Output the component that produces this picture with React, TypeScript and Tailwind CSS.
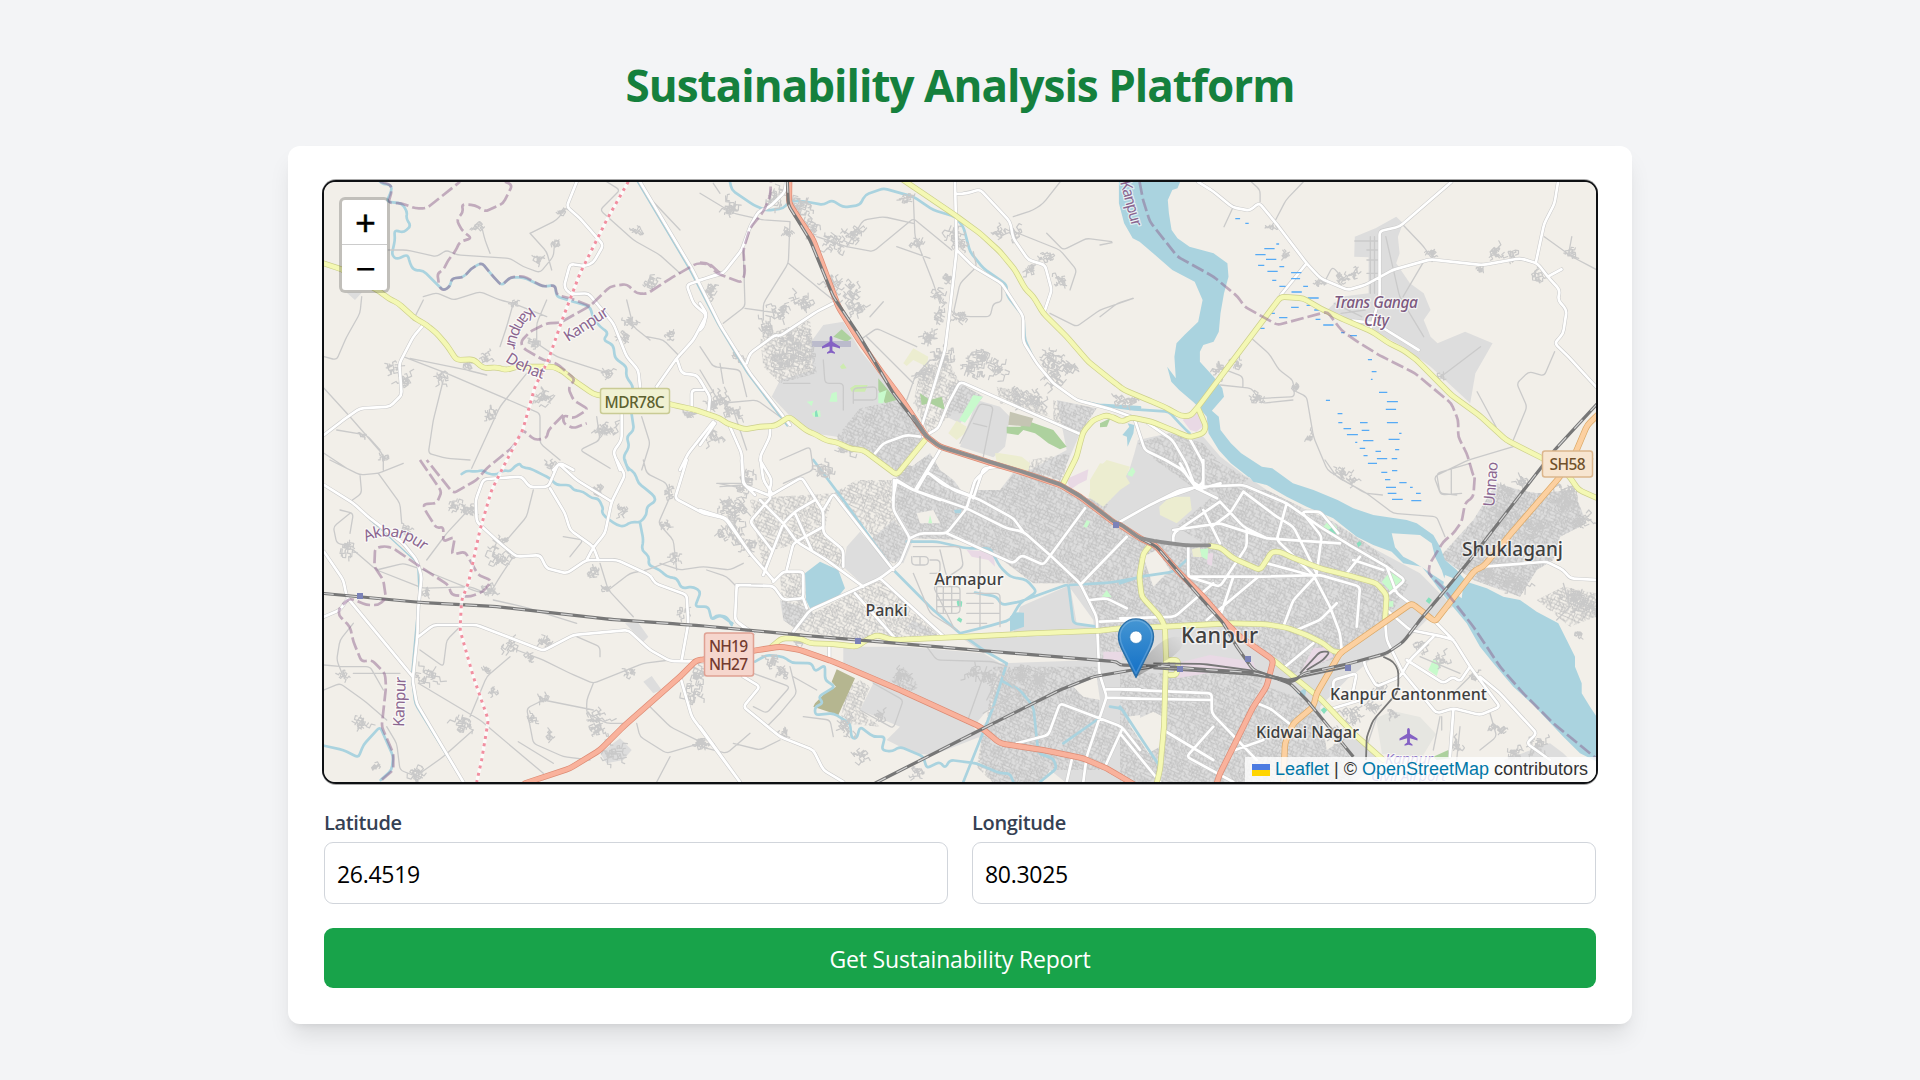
import React from "react";

/* Map geometry is stored per survey sheet: a bare token selects the sheet, "x,y" tokens are points on it. */
const SHEETS: Record<string, [number, number, number]> = {
  "1": [280, 140, 1 / 3],
  "2": [700, 170, 1 / 3],
  "3": [1100, 170, 540 / 1568],
  "4": [310, 460, 1 / 3],
  "5": [700, 460, 1 / 3],
  "6": [1120, 460, 1 / 3],
};

type Pt = [number, number];

function pts(src: string): Pt[] {
  let s = SHEETS["1"];
  const out: Pt[] = [];
  for (const t of src.trim().split(/\s+/)) {
    if (t.indexOf(",") < 0) {
      s = SHEETS[t];
      continue;
    }
    const [a, b] = t.split(",").map(Number);
    out.push([s[0] + a * s[2], s[1] + b / 3]);
  }
  return out;
}

const f = (n: number) => n.toFixed(1);
const line = (src: string) => "M" + pts(src).map((p) => f(p[0]) + " " + f(p[1])).join("L");
const lines = (a: string[]) => a.map(line).join("");
const area = (a: string[]) => a.map((s) => line(s) + "Z").join("");

/* Polyline whose corners are rounded by at most 4px. */
function smooth(src: string) {
  const p = pts(src);
  let d = "M" + f(p[0][0]) + " " + f(p[0][1]);
  const toward = (a: Pt, b: Pt): Pt => {
    const l = Math.hypot(b[0] - a[0], b[1] - a[1]) || 1;
    const t = Math.min(0.5, 4 / l);
    return [a[0] + (b[0] - a[0]) * t, a[1] + (b[1] - a[1]) * t];
  };
  for (let i = 1; i < p.length - 1; i++) {
    const u = toward(p[i], p[i - 1]);
    const v = toward(p[i], p[i + 1]);
    d += "L" + f(u[0]) + " " + f(u[1]) + "Q" + f(p[i][0]) + " " + f(p[i][1]) + " " + f(v[0]) + " " + f(v[1]);
  }
  const e = p[p.length - 1];
  return d + "L" + f(e[0]) + " " + f(e[1]);
}
const smooths = (a: string[]) => a.map(smooth).join("");

function rng(seed: number) {
  let s = seed;
  return () => {
    s = (s * 1664525 + 1013904223) % 4294967296;
    return s / 4294967296;
  };
}

/* Short right-angled lanes around a village centre. */
function village(x: number, y: number, r: number, seed: number) {
  const R = rng(seed * 7919 + 13);
  const base = R() * 1.57;
  let d = "";
  const n = Math.round(3 + r * 1.1);
  for (let i = 0; i < n; i++) {
    const a = R() * 6.283;
    const q = R() * r * 0.75;
    let cx = x + Math.cos(a) * q;
    let cy = y + Math.sin(a) * q * 0.8;
    d += "M" + f(cx) + " " + f(cy);
    let h = base + Math.floor(R() * 4) * 1.571;
    for (let k = 0; k < 3; k++) {
      const l = 1.5 + R() * Math.min(4.5, r * 0.35);
      cx += Math.cos(h) * l;
      cy += Math.sin(h) * l;
      d += "L" + f(cx) + " " + f(cy);
      h += (R() < 0.5 ? 1 : -1) * (1.2 + R() * 0.5);
    }
  }
  return d;
}

/* Block-like street mesh used to fill built-up areas. */
function mesh(size: number, step: number, seed: number) {
  const R = rng(seed);
  let d = "";
  for (let y = 0; y < size; y += step)
    for (let x = 0; x < size; x += step) {
      if (R() < 0.75) d += "M" + f(x) + " " + f(y) + "l" + f(step) + " " + f((R() - 0.5) * 2);
      if (R() < 0.75) d += "M" + f(x + R() * 2) + " " + f(y) + "l" + f((R() - 0.5) * 2) + " " + f(step);
      if (R() < 0.3) d += "M" + f(x) + " " + f(y) + "l" + f(step * 1.3) + " " + f(step);
    }
  return d;
}

const RIVER =
  "3 55,30 55,100 70,160 95,205 115,215 160,255 210,300 275,335 298,390 285,455 245,495 222,520 216,560 220,625 195,590 207,635 230,660 270,695 285,710 310,740 315,790 345,840 380,880 430,920 480,945 6 375,35 400,65 440,75 500,110 560,140 640,175 710,230 760,255 815,275 850,310 905,320 930,350 955,385 990,430 1040,490 1080,560 1120,610 1180,680 1240,735 1330,830 1380,880 1430,905 1430,770 1410,740 1385,700 1385,670 1365,620 1365,590 1340,540 1315,490 1250,455 1200,420 1150,410 1100,385 1040,365 1010,330 975,300 960,260 940,225 890,190 860,180 760,165 700,145 3 690,990 620,960 560,940 500,895 470,890 410,850 380,820 350,780 345,740 325,722 360,680 355,655 330,620 290,575 290,545 300,525 330,515 345,485 350,430 360,370 373,320 370,280 330,250 260,230 225,205 208,180 200,130 197,90 210,60 225,55 235,30";

const ISLAND = ["6 815,220 900,225 935,250 945,290 965,330 978,370 940,345 910,325 880,305 850,290 825,262", "6 975,345 1000,355 985,385 970,375", "6 1015,385 1028,390 1025,415 1012,405"];

const URBAN = [
  "2 330,520 370,465 430,455 480,540 560,640 620,700 690,800 600,910 450,830 410,800 340,790 300,770 215,680 240,630 340,600",
  "2 830,690 900,710 930,740 915,830 880,862 780,830",
  "2 1070,690 1190,715 1140,790 1080,930 990,900 1100,840",
  "2 750,650 780,640 850,680 780,760 740,740",
  "2 580,930 690,850 720,900 760,930 830,960 900,960 960,880 1080,950 1160,985 1230,990 1320,850 3 85,900 100,850 110,810 200,790 300,800 350,860 430,925 6 375,45 440,90 560,150 640,185 760,265 900,340 1000,440 920,480 840,560 760,590 620,720 720,830 790,900 700,970 5 1100,970 1050,930 850,860 830,820 870,770 900,610 1190,600 1180,480 1100,370 1000,370 880,280 800,240 630,235 580,140",
  "5 430,560 620,560 850,580 900,610 870,740 820,800 840,830 700,885 640,880 560,840 600,800 480,750 520,670 430,610",
  "5 960,440 1110,375 1130,490 1190,500 1190,600 850,580 780,530 940,520",
  "5 440,260 480,215 580,330 495,380 430,320",
  "5 580,180 640,240 610,310 560,300 510,240",
  "5 640,480 720,530 690,530 620,500",
  "5 850,800 1050,930 1020,970 880,970 840,900",
  "5 240,420 320,445 340,460 290,510 250,480",
  "3 740,200 800,175 860,140 880,160 865,200 870,250 860,280 900,340 940,370 960,420 940,450 960,500 980,520 1060,485 1140,520 1090,610 1075,700 960,590 880,530 790,480 660,420 700,380 780,370 780,262 738,260",
  "6 960,290 1060,180 1130,70 1200,90 1250,100 1360,90 1400,190 1320,230 1300,300 1250,330 1200,410 1060,360",
  "6 1150,900 1290,850 1330,880 1380,930 1180,930",
  "4 870,880 930,835 965,870 940,900 890,910",
  "4 1000,665 1025,648 1055,690 1030,700",
  "4 945,490 985,488 1015,530 1000,545",
  "1 200,458 245,458 225,480",
];

const DENSE = [
  "2 480,715 600,690 690,800 600,910 450,830 410,800",
  "2 180,500 330,450 350,610 240,640 190,590",
  "2 660,600 740,560 780,640 850,680 800,730 760,730 700,780 690,800 640,700",
  "2 1060,690 1190,715 1140,790 1060,760",
  "2 890,650 1000,670 1050,740 900,700",
  "2 990,870 1110,850 1085,940 980,905",
  "2 580,930 690,850 720,900 760,930 830,960 900,960 960,890 1080,950 1160,985 1230,990 1200,1050 900,1000 560,1000",
  "5 600,60 700,20 830,110 960,75 1085,85 1320,240 1320,600 1200,600 1190,480 1150,370 1000,370 880,280 800,240 640,235 590,150",
  "6 0,220 100,250 270,260 450,330 440,90 560,150 640,185 760,265 870,370 800,480 660,590 520,640 460,610 330,500 0,500",
  "6 170,200 300,90 440,90 450,330 330,300",
  "6 0,640 440,640 350,840 290,966 0,966",
  "6 440,680 560,720 690,890 700,966 290,966",
  "3 110,820 200,790 300,820 350,880 430,925 430,980 280,960 160,870",
  "5 880,620 1190,620 1200,780 1260,800 1220,930 1050,930 850,860",
  "5 850,810 1060,930 1020,970 880,970 830,920",
  "5 240,340 310,335 320,440 340,460 290,510 250,480",
  "5 340,460 540,355 720,530 590,540 400,530 290,510",
  "5 510,240 580,180 630,240 600,310 560,310",
  "5 470,60 580,60 590,160 620,240 520,230 400,100",
  "5 150,120 230,110 400,100 370,220 430,260 430,330 300,250 220,270 190,330",
  "6 960,290 1060,180 1130,70 1200,90 1250,100 1360,90 1400,190 1320,230 1300,300 1250,330 1200,410 1060,360",
  "6 1250,420 1330,380 1428,400 1428,470 1350,500",
  "5 440,680 480,660 510,680 480,750 540,800 420,790",
  "5 570,660 610,620 660,680 620,700",
];

const LIGHT = [
  "6 70,290 110,270 150,330 100,380",
  "6 25,790 100,755 130,770 120,860 85,880",
  "5 1120,680 1190,650 1200,720 1150,710",
  "2 740,900 860,890 900,905 830,960 800,985",
  "5 1280,770 1320,765 1320,820",
  "6 700,640 830,590 860,720 620,870 600,740",
  "5 650,160 700,150 720,190 660,190",
];

const GREEN = [
  "2 400,500 425,478 455,505 440,515",
  "2 535,625 590,690 555,700 535,660",
  "2 660,670 690,690 725,680 735,720 690,700 665,705",
  "2 990,755 1060,780 1100,830 1080,838 1045,820 1020,800 1005,790 970,780 955,795 920,790 920,770 960,770",
  "3 0,760 30,745 20,770 0,772",
  "6 940,890 985,870 990,895 950,900",
];
const MINT = [
  "2 777,750 820,675 848,680 795,758",
  "2 395,670 410,665 412,695 388,695",
  "2 320,695 340,692 335,708",
  "2 335,730 360,720 362,740 340,740",
  "2 535,670 560,660 550,700 535,700",
  "6 610,200 625,183 650,200 655,225",
  "6 785,365 810,335 855,365 815,398",
  "6 925,630 940,597 962,610 950,648",
  "6 805,425 820,422 820,440 805,440",
  "6 240,268 265,265 262,300 245,290",
  "5 1205,410 1220,390 1235,412",
  "5 1150,200 1160,180 1170,185 1160,203",
  "5 685,190 690,165 697,190",
  "3 80,910 95,892 103,905 92,920",
  "2 1282,915 1295,893 1305,905 1297,920",
];
const PITCH = [
  "5 770,425 775,418 787,425 785,440 773,440",
  "5 770,480 777,472 787,478 783,488",
  "6 625,210 640,200 655,210 645,225",
  "6 710,250 720,243 725,253 715,262",
  "6 917,423 926,412 936,420 928,432",
  "6 602,750 612,742 622,750 612,762",
  "2 345,725 350,720 355,740 345,740",
];
const LIME = ["2 450,655 465,645 503,645 495,665 455,665", "2 420,590 430,580 440,595 425,597"];
const GRASS = [
  "2 610,580 640,535 685,560 680,590 640,570 620,588",
  "2 745,790 770,752 800,770 795,790 770,810",
  "2 885,850 900,850 965,860 990,880 985,905 890,875",
  "2 1170,930 1200,880 1260,890 1290,940 1260,960 1225,985 1170,960",
  "5 1190,30 1220,0 1290,20 1260,90 1210,140 1165,110",
  "3 0,900 30,890 70,920 60,950 10,985 0,985",
  "6 118,140 150,110 210,110 215,150 170,190 120,165",
  "6 215,268 240,262 245,292 220,290",
];
const PINK = [
  "3 240,750 285,720 298,770 280,785 262,780",
  "2 1105,925 1165,898 1160,925 1110,960",
  "5 1100,60 1165,30 1160,60 1110,85",
  "5 800,270 880,275 885,320 865,300 815,290",
  "5 1210,575 1270,575 1265,600 1210,600",
  "6 170,610 270,585 400,605 410,635 350,625 170,655",
  "6 540,640 580,565 630,560 640,590",
  "6 260,280 280,280 275,318 262,312",
];
const OLIVE = ["5 410,628 465,655 415,765 340,740 345,730 375,700 408,680 395,665"];
const BROWN = ["2 930,725 1000,745 990,770 925,765"];

const WATER_AREAS = [
  "5 315,340 360,305 415,330 435,385 410,415 330,445 318,420",
  "5 930,470 945,457 972,458 972,500 930,515",
  "3 65,795 85,770 80,760 100,765 97,790 80,830 78,800",
  "6 530,700 560,682 555,712",
  "5 762,150 785,148 782,160 765,160",
];

const STREAMS = [
  "1 300,125 310,132 333,135 335,150 320,185 365,190 382,215 378,235 393,258 370,278 343,270 345,300 335,345 350,358 383,343 390,370 400,390 430,392 490,452 510,440 515,415 550,412 575,385 605,368 640,410 665,437 690,412 730,412 790,440 825,435 830,470 880,485 930,500 940,535 960,560 985,578 970,600 1000,615 1005,655 1040,680 1038,710 1060,740 1050,790 1062,870 1040,890 1048,920 1030,950 1045,990",
  "4 945,0 950,20 975,40 985,70 1005,85 1035,110 1035,125 1010,140 1010,165 990,188 965,185 940,200 920,195 885,170 875,155 880,145 865,115 845,115 820,95 790,90 780,75 740,75 720,55 690,40 660,25 635,22 630,10 615,18 600,35 580,30 560,45 530,40 520,30 500,35 470,32 455,42",
  "4 990,188 1000,240 995,270 1018,290 1015,315 1050,330 1070,350 1100,355 1115,385 1150,380 1172,395 1155,440 1195,440 1205,480 1220,465 1250,470 1265,495",
  "2 90,36 95,60 160,105 200,122 250,115 270,92 320,95 370,105 395,90 430,112 480,105 495,75 550,55 640,80 700,120 765,140 790,170 810,245 850,295 900,330 920,345 920,375 970,440 975,510 1000,565",
  "2 1130,690 1200,705 1320,712",
  "3 0,705 100,718 200,725 240,770 260,790",
  "5 340,0 430,120 580,330 700,450 780,520 850,570 920,610",
  "5 620,245 710,245 800,265 870,265 900,320 930,350 980,360 1010,395 960,430 930,480 860,500 780,520",
  "5 825,398 890,410 905,435 960,425 1105,372 1120,490 1190,500",
  "5 1110,375 1230,368 1320,352",
  "5 0,440 25,440 35,480 60,465 97,490",
  "5 165,605 200,585 250,590 275,608 335,610 345,635 375,615 375,660 405,680 355,710 370,730 345,740 345,765 400,760 450,790 455,835 470,835 480,800 520,830 555,830 545,870 575,875 600,860 670,890 680,925 720,905 735,925 750,900 830,910 900,940 930,940 940,966",
  "5 920,610 880,740 790,966",
  "5 910,665 960,690 1000,740 1015,880 1060,895 1070,925 1020,966",
  "4 42,857 100,870 145,893 160,855 210,800 250,890 245,930 212,960",
  "6 0,370 60,350 160,335 200,300",
  "6 0,740 60,830 120,920",
  "5 1230,740 1265,745 1320,830",
  "5 1190,780 1090,850",
];

const CANALS = ["1 1072,125 1228,388 1314,555 2 143,612 262,768", "4 180,180 210,205 323,310 327,400 304,650 314,732 458,966"];

const WHITE = [
  "1 1080,125 1235,385 1320,555 2 150,610 270,765",
  "1 890,125 860,200 900,235 970,315 940,368 915,378 870,372 852,440 870,462 925,460 1000,550 1040,650 1075,690 1080,740",
  "1 132,885 190,840 240,805 330,800 365,765 358,670 400,590 430,555",
  "1 1320,400 1220,435 1240,490 1280,525 1240,600 1190,655 1130,740",
  "1 1190,655 1205,700 1250,705 1290,770 1285,820",
  "1 1270,750 1235,750 1235,800",
  "1 1300,845 1225,940 1200,990",
  "1 1025,820 1025,900 1000,935 1020,990",
  "1 820,990 840,968 880,990",
  "2 258,36 255,65 210,110 175,125 150,170 125,240 70,310 0,330",
  "2 765,36 770,240 745,460 735,540 665,770",
  "2 765,72 800,70 840,58 930,155 940,205 985,270 1035,285 1055,360 1035,420",
  "2 770,240 820,290 905,340 970,440 970,515 1010,580 1060,640 1130,690 1240,720 1320,750",
  "2 400,400 350,425 240,498 225,495 150,550 140,580",
  "2 660,800 620,795 550,820 525,850",
  "2 670,800 715,775 745,700 780,635 1140,792",
  "2 720,840 650,960",
  "2 680,905 730,945 820,980",
  "2 820,985 850,895 900,890",
  "2 590,930 640,960 720,990",
  "2 590,930 578,990",
  "2 90,770 125,850 130,940 165,975",
  "2 210,770 210,800 180,860 190,930 215,970",
  "2 0,825 45,760",
  "2 0,400 20,430 10,470 0,480",
  "2 0,630 30,680 25,725",
  "3 285,36 330,65 385,112 435,122 462,98 515,165 600,280 640,325 720,360 770,345 850,300 960,268 1110,285 1220,265 1270,280 1300,320 1335,360 1330,390 1355,420 1345,490 1320,520 1360,560 1440,650",
  "3 1300,320 1340,298",
  "3 1330,36 1320,100 1290,160 1265,280",
  "3 1020,36 870,170 812,183 812,380 785,480",
  "3 600,280 525,375",
  "3 735,452 800,460 925,540",
  "3 100,745 130,840 190,870 240,900 280,955",
  "3 140,760 210,810 250,880 280,960 350,940",
  "3 260,805 300,880 300,940 270,955 175,990",
  "3 280,955 340,985",
  "4 42,75 130,130 180,175 280,250 320,300 335,350 325,440 322,530 308,660 320,730 460,966",
  "4 42,275 100,360 110,410 308,650",
  "4 600,52 520,58 497,120 500,185 570,250 620,290 690,285 710,325 770,340 830,300 920,300 1020,345 1035,370 1130,405 1135,490 1115,600",
  "4 600,52 635,50 660,82 715,80 745,10 800,60 905,125",
  "4 720,85 765,160 780,210 850,260 865,300",
  "4 920,0 945,45 905,125 885,220 850,262 830,300",
  "4 1130,0 1095,115 1180,160 1245,175 1320,280",
  "4 325,530 370,495 500,495 700,572 790,525 955,510 1020,570 1080,603 1180,605",
  "4 1112,655 1145,770 1290,966",
  "4 1320,375 1280,375 1275,480 1310,510",
  "4 42,470 90,450 110,420",
  "5 125,0 130,75 215,110 150,185 215,270",
  "5 180,0 215,60 205,110 305,52 370,155 370,220 430,270 430,320",
  "5 0,150 80,175 150,280 220,360",
  "5 180,120 250,190 290,245 380,300 490,380",
  "5 190,345 250,190 285,155 345,120",
  "5 260,330 280,250 370,200",
  "5 285,160 335,270",
  "5 370,150 400,100 580,330",
  "5 110,375 220,378 250,420 310,415 310,335 250,335 220,365",
  "5 110,375 105,480 160,520",
  "5 280,515 330,450 540,355 600,310 630,235 580,150 582,60",
  "5 310,415 320,445",
  "5 540,355 730,528",
  "5 465,400 590,540",
  "5 582,60 640,90 800,145 920,205 970,215 1050,285 1140,370 1190,470 1198,640 1220,710 1160,890 1150,966",
  "5 645,90 700,0",
  "5 680,35 760,90 840,120 940,175 970,215",
  "5 630,235 660,220 740,220 800,145 825,60 870,20",
  "5 740,220 850,270 940,310 965,285 1030,315 1155,145",
  "5 1145,370 1280,230",
  "5 1170,420 1220,415 1280,445",
  "5 1200,485 1320,480",
  "5 1220,688 1320,688",
  "5 1220,713 1320,716",
  "5 950,850 1045,825 1080,730 1265,800 1320,870",
  "5 1265,810 1215,920",
  "5 1115,900 1100,966",
  "5 130,650 180,680 130,740 240,830 340,870 370,930 430,966",
  "5 0,800 120,966",
  "5 388,560 388,600",
  "6 0,185 90,135 180,90 240,80 370,75 500,130 600,200 680,250 800,320 855,360 810,400",
  "6 250,75 250,0",
  "6 180,10 210,60 240,80",
  "6 300,125 160,220 160,250",
  "6 160,210 300,190 440,235 660,250",
  "6 250,150 300,250",
  "6 300,125 370,200 440,235",
  "6 370,95 330,160 275,200",
  "6 380,205 380,260 300,380 205,350 205,255",
  "6 370,95 470,170 520,200 590,340",
  "6 500,130 470,240 580,345 630,440 660,520 665,570",
  "6 590,340 605,230 545,155 600,155 655,220",
  "6 205,350 415,350 600,345 720,380 710,500",
  "6 415,350 260,480",
  "6 590,345 520,420 490,500",
  "6 440,310 570,345",
  "6 340,350 300,470",
  "6 280,370 165,470 0,475",
  "6 720,290 680,340",
  "6 700,300 790,330",
  "6 800,320 830,400 870,430",
  "6 650,430 600,480 530,510",
  "6 0,688 275,700 275,760 410,900",
  "6 0,715 275,720",
  "6 280,800 200,890 340,966",
  "6 130,810 280,900",
  "6 0,820 120,966",
  "6 410,730 450,745 520,800",
  "6 490,625 580,550",
  "6 795,480 800,540 850,640 950,760 1000,745 1080,765 1140,740 1050,620 1000,540 950,490",
  "6 800,450 870,510 970,530 1000,540",
  "6 860,600 970,670 1000,650 1020,665 1050,620",
  "6 940,530 870,600 840,650 770,680 740,630 730,600 800,580",
  "6 640,700 640,660 710,640 700,690",
  "6 1080,650 1140,700 1250,820 1220,850 1290,900",
  "6 1000,750 990,890",
  "6 640,745 790,700",
  "6 1090,320 1280,305 1330,330 1350,355 1430,360",
  "6 345,870 430,840",
];

const HAIR = [
  "1 980,125 1020,150 960,210 1060,300 1140,345 1200,400",
  "1 1300,130 1320,160",
  "1 1120,185 1200,270",
  "1 325,330 380,330 470,350 500,330 530,345 690,355 730,380 780,398 820,350 825,300",
  "1 430,470 470,458 520,480 600,455 660,480 700,490 800,530",
  "1 430,480 400,540",
  "1 245,470 240,520 200,590 170,660 132,650",
  "1 370,650 500,700 780,820 780,910 840,960",
  "1 390,655 560,690 620,705",
  "1 700,490 680,560 660,620",
  "1 800,480 770,550 770,610",
  "1 770,610 830,650 985,700",
  "1 740,700 660,800 575,985",
  "1 490,720 460,840 445,940 500,955 570,960",
  "1 132,745 210,830 310,945 310,990",
  "1 170,870 260,885 300,930",
  "1 132,940 200,985",
  "1 575,270 600,240 615,300 630,340",
  "1 750,280 830,240 850,215",
  "1 750,280 800,335 815,390",
  "1 1200,650 1150,600 1100,590",
  "1 1040,480 1060,560 1110,600",
  "1 1085,830 1110,910 1085,990",
  "1 950,830 960,900 900,930 990,985",
  "2 0,70 100,130 190,150 270,155",
  "2 270,155 265,280 190,400 190,450",
  "2 265,280 350,350 400,390",
  "2 130,240 135,410 70,460",
  "2 135,415 240,430",
  "2 350,200 440,230 520,245 640,145 755,240",
  "2 640,80 645,200 700,340 720,400",
  "2 440,230 490,150 550,140 640,160",
  "2 820,245 830,290 780,340 760,430 800,440 870,440 880,400 905,395 905,345",
  "2 930,180 1080,240 1130,300 1110,360",
  "2 1080,36 1030,100 1000,120 940,140",
  "2 1040,190 1090,240 1160,205 1235,215",
  "2 1050,430 1130,470 1200,420 1300,385",
  "2 480,510 530,475 650,530",
  "2 500,500 620,620 640,640",
  "2 620,690 645,620 690,570",
  "2 550,395 510,440",
  "2 590,230 690,265",
  "2 0,530 40,590 120,600 140,680",
  "2 0,600 60,700 170,690 240,740",
  "2 60,580 70,640",
  "2 100,720 140,840",
  "2 240,870 330,830 340,900 250,940",
  "2 50,940 130,940",
  "2 780,820 840,700 880,710 850,860",
  "2 820,760 860,770",
  "2 460,690 530,690 530,650 460,655 460,700",
  "2 370,570 375,640 430,640 430,720",
  "2 250,640 330,640",
  "3 1290,200 1370,260 1440,298",
  "3 1390,265 1360,255 1370,200",
  "3 880,165 940,230 960,260",
  "3 940,275 880,380",
  "3 830,200 870,380 940,500",
  "3 785,200 785,370",
  "3 797,200 797,370",
  "3 740,213 810,213",
  "3 775,240 810,240",
  "3 775,270 810,270",
  "3 775,310 810,310",
  "3 440,505 490,550 520,600 560,630 565,680 470,685",
  "3 350,645 440,655 470,700 560,690",
  "3 560,660 600,680 620,800 660,900 770,970 820,975",
  "3 340,590 415,620 415,650",
  "3 1095,665 1150,770",
  "3 1200,810 1240,710 1210,640 1245,605 1290,618 1320,545",
  "3 1200,830 1070,870 970,920 990,975 1050,970",
  "3 1020,900 1020,970",
  "3 990,620 1105,530",
  "3 700,430 770,420",
  "3 680,400 760,440",
  "3 590,36 540,90 510,150",
  "3 440,36 465,60 465,95",
  "3 0,440 50,400 95,385",
  "3 0,225 35,218",
  "3 360,170 385,115",
  "3 650,340 675,290 710,330",
  "6 615,0 650,50 740,100 820,160 950,170 975,230",
  "6 1050,10 950,40 960,100 1010,105",
  "4 60,0 150,45 205,40 280,10",
  "4 150,45 155,100 120,125",
  "4 205,40 270,130 275,190",
  "4 120,160 70,200 80,250 130,260",
  "4 90,150 130,160 120,220",
  "4 130,270 200,330 280,310 340,330 500,395 560,400",
  "4 200,330 340,385 480,380 530,400",
  "4 470,155 410,220 350,300",
  "4 670,90 650,170 590,240",
  "4 610,290 570,350 540,400",
  "4 550,420 640,440 800,490",
  "4 325,670 510,780 700,940",
  "4 330,570 400,620 410,540 450,500",
  "4 130,490 90,540 80,600 100,650",
  "4 42,615 100,620 180,620 220,690",
  "4 42,690 90,670 160,720 230,780",
  "4 230,800 260,850 270,930 320,950",
  "4 600,590 530,650 480,770",
  "4 620,570 700,600 780,640 850,670 1000,610 1080,600",
  "4 800,530 870,560 870,590",
  "4 850,670 830,720 830,760 890,790 960,790",
  "4 700,720 650,745 670,850 760,890 840,900",
  "4 700,720 850,750",
  "4 625,845 730,910",
  "4 490,810 400,890 330,940",
  "4 980,790 990,830 1070,880 1170,850",
  "4 1080,890 1040,966",
  "4 1020,740 1080,800 1170,845",
  "4 1170,860 1250,880 1320,820",
  "4 870,310 895,390 970,470",
  "4 895,390 960,340 1010,330 1090,300",
  "4 1000,0 1010,40 1070,70 1080,110",
  "4 1080,110 1045,190 1090,240 1100,330",
  "4 1050,310 1110,330 1180,320 1260,330 1300,310",
  "4 760,230 820,240 780,290",
  "4 130,640 270,640",
  "4 1225,70 1300,85",
  "5 160,640 270,680 200,760 160,740",
  "5 270,620 290,700 240,760",
  "5 240,760 200,800",
  "5 280,650 350,690",
  "5 310,770 390,780 400,830",
  "5 100,850 180,870 240,840",
  "5 680,560 710,600 880,605 920,620",
  "5 860,620 800,790",
  "5 520,670 610,720 580,805 480,750",
  "5 640,290 685,290 685,315 635,315 635,290",
  "5 660,290 660,315",
  "5 640,260 780,260 790,320 700,380 760,500",
  "5 710,380 780,380 780,460 710,460 710,380",
  "5 710,400 780,400",
  "5 710,420 780,420",
  "5 710,440 780,440",
  "5 730,380 730,460",
  "5 755,380 755,460",
  "5 720,270 740,350 850,350",
  "5 840,290 840,500",
  "5 800,400 900,400 900,500",
  "5 800,430 880,430",
  "5 800,460 900,460",
  "5 800,490 860,490",
  "5 640,340 690,460 770,510",
  "5 690,300 720,300 720,340 690,340",
  "5 20,330 80,350 110,380",
  "5 60,80 130,75",
  "6 740,860 770,770",
  "6 940,870 960,770",
  "6 965,770 965,810",
  "6 1020,800 1010,900",
  "6 1110,760 1130,830 1080,870",
  "6 1060,640 1000,700",
  "6 900,590 1020,640",
  "6 1060,330 1200,360",
  "6 1330,370 1350,440 1310,480",
  "5 860,720 900,640 960,700",
  "5 850,760 950,700 980,760",
  "5 880,790 960,740",
  "5 900,700 940,780",
];

const VILLAGES: string[] = [
  "1 850,215 4", "1 775,360 5", "1 825,310 4", "1 1075,275 5", "1 595,262 4", "1 620,650 6", "1 380,715 9", "1 485,715 6", "1 565,675 5", "1 630,822 6", "1 770,605 7", "1 705,490 3", "1 1050,545 7", "1 1170,585 5", "1 1120,430 8", "1 1290,455 8", "1 1030,590 6", "1 800,770 11", "1 985,700 6", "1 980,870 13", "1 1300,890 9", "1 1230,820 6", "1 310,950 4", "1 340,680 7", "1 250,885 2",
  "2 90,115 12", "2 230,80 14", "2 300,110 14", "2 340,170 10", "2 400,220 15", "2 460,190 11", "2 265,185 6", "2 450,370 14", "2 400,340 10", "2 470,420 10", "2 240,420 13", "2 300,400 12", "2 200,470 10", "2 280,520 18", "2 240,570 17", "2 310,570 14", "2 620,90 6", "2 760,200 10", "2 780,230 6", "2 715,380 8", "2 740,330 7", "2 780,440 8", "2 900,190 7", "2 945,190 7", "2 1035,260 7", "2 1080,330 7", "2 990,300 6", "2 690,500 11", "2 720,560 15", "2 680,610 12", "2 820,590 17", "2 850,560 13", "2 890,600 11", "2 1050,560 12", "2 1100,590 12", "2 1060,620 15", "2 1000,690 14", "2 950,680 12", "2 35,360 4", "2 60,690 12", "2 100,720 10", "2 30,700 8", "2 110,560 6", "2 370,900 10", "2 440,830 11", "2 130,960 8", "2 720,440 7", "2 650,220 6",
  "3 500,170 4", "3 640,340 5", "3 700,325 6", "3 740,310 5", "3 540,255 4", "3 1150,250 8", "3 1190,260 7", "3 1270,320 6", "3 1110,300 4", "3 1370,250 6", "3 345,600 7", "3 400,580 7", "3 460,685 7", "3 565,650 4", "3 610,800 4", "3 700,910 7", "3 730,930 5", "3 960,250 5", "3 60,690 7", "3 90,695 7", "3 1180,960 7", "3 1230,930 8", "3 1400,860 11", "3 1350,970 13", "3 990,620 3",
  "4 120,265 9", "4 285,210 5", "4 430,135 7", "4 475,145 9", "4 570,295 14", "4 580,240 4", "4 720,15 5", "4 860,85 6", "4 935,150 6", "4 850,330 7", "4 890,390 4", "4 1075,100 6", "4 1120,455 5", "4 1095,290 5", "4 1065,190 5", "4 350,650 12", "4 460,785 11", "4 160,790 8", "4 100,645 4", "4 600,560 8", "4 705,545 7", "4 660,590 5", "4 545,695 4", "4 535,630 4", "4 860,780 12", "4 870,810 8", "4 670,775 5", "4 700,715 5", "4 910,880 12", "4 1175,850 7", "4 1150,700 11", "4 1170,640 12", "4 960,640 5", "4 320,945 10", "4 200,920 4", "4 720,830 4", "4 1290,150 11", "4 1240,220 7", "4 350,400 4", "4 540,390 7",
  "5 80,140 10", "5 110,230 10", "5 150,60 10", "5 100,180 14", "5 150,260 10", "5 215,610 8", "5 250,640 7", "5 60,620 9", "5 290,545 7", "5 600,650 8", "5 440,800 10", "5 480,890 7", "5 540,770 6", "5 820,640 8", "5 860,650 10", "5 650,940 7", "5 250,820 5", "5 10,850 6", "5 610,40 13", "5 1010,660 11", "5 960,640 9",
  "6 1010,860 7", "6 1120,800 5", "6 1150,810 4", "6 780,690 8", "6 640,830 14", "6 700,760 12", "6 900,560 7", "6 960,600 8", "6 1060,650 6", "6 820,760 5", "6 1250,860 12", "6 1180,880 10", "6 1360,420 14", "6 1400,440 12", "6 1100,340 14", "6 1180,370 16", "6 1380,520 4", "6 1330,130 15", "6 1380,180 12", "6 750,740 8", "6 1140,170 17", "6 1230,200 18",
];

const BORDERS = [
  "1 300,125 333,135 335,155 325,188 365,190 405,205 440,205 540,125",
  "1 675,125 697,135 670,190 615,215 585,195 545,193 550,215 530,240 545,270 575,295 540,305 525,335 505,360 490,390 472,400 478,440 490,452 510,440 515,415 550,412 575,385 605,368 640,410 665,437 690,412 730,408 790,440 825,435 830,465 880,478 930,498",
  "1 1320,400 1290,372 1250,370 1180,410 1100,462 1070,460 1040,432 990,440 930,498 840,548 800,550 750,575 722,605 730,625 790,660 830,670 885,718 865,745 880,780 925,808 880,835 850,825 850,850 880,865 920,850",
  "1 850,825 805,870 800,895 765,900 728,870 700,920 620,985 4 500,60 430,100 350,0",
  "4 330,0 395,95 380,130 340,132 345,150 380,205 400,200 400,245 435,230 425,285 465,275 485,310 505,345 545,362 520,395 480,410 425,405 415,375 330,320 250,265 225,258 195,265 193,320 220,360 228,415 205,435 170,435 120,415 90,440 85,465 120,500 130,545 155,605 185,600 225,640 228,680 215,800 250,880 250,930 212,962",
  "2 0,278 25,280 50,310 125,338 135,310 130,240 150,175 190,125 210,80 213,36",
  "3 115,36 125,90 145,155 225,260 330,320 400,380 420,410 515,465 660,425 700,480 740,510 810,555 915,610 1020,700 1040,750 1040,800 1065,850 1085,920 6 1065,40 1060,110 1035,130 1025,185 1000,220 970,245 930,310 925,340 970,385 1060,500 1140,620 1210,700 1300,790 1428,895",
];

const YELLOW = [
  "1 125,368 185,388 300,455 325,475 355,490 405,535 440,555 470,580 500,615 530,660 580,658 610,685 650,682 680,690 710,680 820,680 850,695 880,720 940,762 980,770 1100,775 1180,795 1240,808 1320,835 2 80,760 135,778 180,770 225,768 268,740 320,782 350,795 380,812 410,817 455,837 490,840 590,915 675,810",
  "2 610,30 765,135 840,190 900,245 945,300 975,355 1000,380 1030,430 1100,500 1165,575 1240,635 3 70,660 140,690 190,712 235,738 262,738 285,710 525,380 590,385 640,415 700,445 790,485 840,520 880,540 920,570 1020,675 1100,735 1180,810 1285,865 1360,915 1390,960 1445,985",
  "3 285,715 308,770 300,790 260,802 220,785 150,755 90,742 65,755 30,738 2 1265,755 1220,735 1180,750 1150,785 1140,820 1130,860 1090,940",
  "6 95,250 70,280 58,350 65,410 120,470 135,500 138,600 132,800 120,930 110,970",
  "5 215,560 245,535 300,535 330,550 400,552 470,560 500,540 530,525 580,540 800,530 1000,520 1200,512 6 0,505 130,500 330,490 440,493 500,503 560,525 610,550 640,575 665,577",
  "6 270,258 300,262 340,295 420,330 440,300 455,275 480,275 510,290 600,325 700,350 770,370 800,405 795,480",
  "6 460,600 600,715 700,820 790,900",
  "6 145,600 175,600 170,645 150,645",
];
const TRUNK = [
  "2 268,32 267,100 300,150 340,210 370,290 400,370 415,410 470,500 540,600 600,680 680,800 720,830 860,875 960,905 1080,945 5 1140,110 1245,190 6 0,195 60,235 105,255 170,330 250,410 310,480 360,530 460,600 440,680 400,740 350,840 300,940 290,970",
  "4 645,970 780,925 870,870 940,800 1110,650 1160,600 1190,598 5 100,585 160,572 240,560 300,570 400,605 600,690 840,800 900,850 1040,872 1150,895 1220,925 1300,972",
];
const ORANGE = ["3 1445,735 1415,765 1380,850 6 1320,50 1165,230 1090,320 1065,330 945,485 920,465 875,430 660,580 590,700 580,740 520,790 495,850 490,970"];
const RAIL = [
  "4 35,400 330,427 560,440 900,478 1100,492 5 0,497 300,525 850,572 1250,605 6 0,615 150,620 250,628 400,638 520,665 550,640 690,610 800,580 850,545 900,480 980,385 1050,300 1250,40 3 1320,840 1445,700",
  "5 525,970 860,800 1080,690 1180,650 1310,628 6 150,612",
  "2 262,32 265,105 330,210 400,380 480,500 580,670 680,800",
  "6 60,235 110,260 230,400 310,490 350,560 400,630 510,670 560,720 700,890",
];
const RAIL_THIN = [
  "6 790,590 820,605 835,630 835,680 830,700 760,780 740,830 738,900",
  "6 100,625 250,635 400,645 520,665",
  "6 100,610 250,612 400,632 500,660 690,620",
  "6 540,640 600,575 630,575 610,600 560,630",
];
const METRO = ["2 640,740 680,800 720,830 860,873 960,903 1080,943 5 1140,108 1245,188 6 0,192 60,235 90,240 120,246 200,256 268,256"];
const RIDGE = "1 1045,125 980,240 900,400 850,530 805,660 765,740 728,870 665,990 4 545,90 510,210 475,370 455,420 450,510 490,650 535,780 515,900 500,966";

const MARSH = "3:400,146,14 427,160,10 516,222,8 492,236,30 466,254,30 497,268,30 468,286,18 528,290,14 501,304,30 570,308,30 506,331,12 568,326,26 597,349,14 530,349,18 571,366,30 619,384,32 566,412,22 607,406,14 502,430,12 532,443,24 630,420,16 633,448,14 663,465,30 471,475,14 736,497,20 705,488,10 784,569,12 796,605,14 789,628,5 822,667,24 662,691,12 849,695,32 845,718,30 697,731,14 698,758,12 766,758,22 849,758,32 718,776,22 771,781,22 733,794,32 872,790,7 779,812,30 854,808,32 744,817,6 762,835,16 863,839,12 808,844,16 771,857,12 819,866,30 855,866,16 791,880,26";
const MARSH_B = "6:758,10,26 793,37,18 824,32,16 803,59,16 849,68,22 813,82,30 874,82,8 816,100,26 895,100,14 832,118,32 889,122,30";

function marsh(src: string) {
  const [k, rest] = src.split(":");
  const s = SHEETS[k];
  return rest
    .split(" ")
    .map((t) => {
      const [x, y, w] = t.split(",").map(Number);
      return "M" + f(s[0] + (x - w / 2) * s[2]) + " " + f(s[1] + y / 3) + "h" + f(w * s[2]);
    })
    .join("");
}

function villagePath() {
  return VILLAGES.map((v, i) => {
    const [k, xy, r] = v.split(" ");
    const p = pts(k + " " + xy)[0];
    return village(p[0], p[1], Number(r) * 1.15, i + 1);
  }).join("");
}

const PLANE =
  "M0-9c1 0 1.4 1.2 1.4 2.4v3.4L9 1.4v2L1.400 1.200v4.200L4 7.400v1.400L0 7.800l-4 1v-1.400l2.600-2v-4.200L-9 3.400v-2l7.600-4.600v-3.400C-1.400-7.800-1-9 0-9z";

function Road({ d, w, casing, fill }: { d: string; w: number; casing: string; fill: string }) {
  return (
    <>
      <path d={d} stroke={casing} strokeWidth={w + 1.4} />
      <path d={d} stroke={fill} strokeWidth={w} />
    </>
  );
}

function Place({ x, y, size, children, w }: { x: number; y: number; size: number; w: number; children: string }) {
  return (
    <text x={x} y={y} fontSize={size} textLength={w} fontWeight={500} fill="#404040" stroke="#ffffff" strokeOpacity={0.6} strokeWidth={3} paintOrder="stroke" strokeLinejoin="round">
      {children}
    </text>
  );
}

function MapCanvas() {
  const white = smooths(WHITE);
  const rail = smooths(RAIL);
  const thin = smooths(RAIL_THIN);
  const border = smooths(BORDERS);
  const ridge = smooth(RIDGE);
  const blobs = (a: string[], c: string) => <path d={area(a)} fill={c} stroke="none" />;
  return (
    <svg className="block h-full w-full" viewBox="324 182 1272 600" fill="none" strokeLinejoin="round" strokeLinecap="round" fontFamily='"Noto Sans", sans-serif'>
      <defs>
        <pattern id="mesh" width="63" height="63" patternUnits="userSpaceOnUse" patternTransform="rotate(24)">
          <path d={mesh(63, 3.5, 77)} stroke="#c0c0c0" strokeWidth="0.8" />
        </pattern>
        <linearGradient id="pin" x1="0" y1="0" x2="0" y2="1">
          <stop offset="0" stopColor="#4596d3" />
          <stop offset="1" stopColor="#126fc6" />
        </linearGradient>
        <linearGradient id="shade" x1="0" y1="1" x2="1" y2="0">
          <stop offset="0" stopColor="#000" stopOpacity="0.45" />
          <stop offset="1" stopColor="#000" stopOpacity="0" />
        </linearGradient>
        <path id="kanpurArc" d="M531 307Q510 318 505 355" />
        <path id="dehatArc" d="M505 361Q523 374 550 381" />
        <path id="akbarArc" d="M366 542Q395 526 428 555" />
      </defs>
      <rect x="324" y="182" width="1272" height="600" fill="#f2efe9" />
      {blobs(URBAN, "#dddddd")}
      {blobs(DENSE, "url(#mesh)")}
      {blobs(LIGHT, "#f2efe9")}
      {blobs(GRASS, "#ecedd0")}
      {blobs(PINK, "#e9d9e5")}
      {blobs(GREEN, "#add19e")}
      {blobs(MINT, "#c8facc")}
      {blobs(PITCH, "#88e0be")}
      {blobs(LIME, "#cdebb0")}
      {blobs(OLIVE, "#b5b690")}
      {blobs(BROWN, "#c5c5b3")}
      <path d="M812 341h39v6h-39z" fill="#bbbbcc" />
      <path d="M1376 718l17-7 27 6 16 17-14 23-40-3z" fill="#e6e6e1" />
      <path d={area([RIVER])} fill="#aad3df" />
      {blobs(ISLAND, "#f2efe9")}
      {blobs(WATER_AREAS, "#aad3df")}
      <path d={smooths(STREAMS)} stroke="#aad3df" strokeWidth="2.7" />
      <path d={villagePath()} stroke="#c9c9c9" strokeWidth="1.2" />
      <path d={smooths(HAIR)} stroke="#cacaca" strokeWidth="1.3" />
      <path d={smooths(CANALS)} stroke="#a3ccd8" strokeWidth="1.3" />
      <path d={white} stroke="#cbcbcb" strokeWidth="3.8" />
      <path d={white} stroke="#ffffff" strokeWidth="2.7" />
      <path d={marsh(MARSH) + marsh(MARSH_B)} stroke="#56aaf5" strokeWidth="1.3" strokeLinecap="butt" />
      <Road d={smooths(YELLOW)} w={4.4} casing="#cdd08c" fill="#f4f8b4" />
      <Road d={smooths(ORANGE)} w={4.8} casing="#dba968" fill="#fcd0a0" />
      <Road d={smooths(TRUNK)} w={4.6} casing="#dd8b74" fill="#f9b29c" />
      <g strokeLinecap="butt">
        <path d={rail} stroke="#777777" strokeWidth="3.2" />
        <path d={rail} stroke="#d4d4d4" strokeWidth="1.2" strokeDasharray="12 12" />
        <path d={thin} stroke="#777777" strokeWidth="1.8" />
      </g>
      <path d={smooths(METRO)} stroke="#8e8e8e" strokeWidth="3.8" />
      <g strokeLinecap="butt">
        <path d={border} stroke="#8d618b" strokeOpacity="0.48" strokeWidth="2.7" strokeDasharray="13 4" />
        <path d={ridge} stroke="#ffffff" strokeOpacity="0.75" strokeWidth="3.4" />
        <path d={ridge} stroke="#f18fa0" strokeWidth="3" strokeDasharray="3 4.500" />
      </g>
      <path d="M357 593h6v6h-6zM855 638h6v6h-6zM1113 522h6v6h-6zM1177 666h6v6h-6zM1245 656h6v6h-6zM1345 665h6v6h-6z" fill="#7b82b8" />

      <path d={PLANE} transform="translate(831 345)" fill="#8461c4" />
      <path d={PLANE} transform="translate(1408.500 737)" fill="#8461c4" />

      <g fill="#8b6690" stroke="#ffffff" strokeOpacity="0.6" strokeWidth="2.5" paintOrder="stroke" fontSize="15.500">
        <text textLength="50"><textPath href="#kanpurArc">Kanpur</textPath></text>
        <text textLength="42"><textPath href="#dehatArc">Dehat</textPath></text>
        <text textLength="62"><textPath href="#akbarArc">Akbarpur</textPath></text>
        <text transform="translate(568 342) rotate(-33)" textLength="50">Kanpur</text>
        <text transform="translate(404 727) rotate(-88)" textLength="50">Kanpur</text>
        <text transform="translate(1120 182) rotate(75)" textLength="47">Kanpur</text>
        <text transform="translate(1494 507) rotate(-85)" textLength="45">Unnao</text>
      </g>
      <g fill="#7d5a80" stroke="#ffffff" strokeOpacity="0.65" strokeWidth="2.5" paintOrder="stroke" fontSize="15.500" fontStyle="italic" fontWeight="500">
        <text x="1334" y="308" textLength="84">Trans Ganga</text>
        <text x="1364" y="326" textLength="25">City</text>
      </g>
      <g fill="#9078c8" stroke="#ffffff" strokeOpacity="0.6" strokeWidth="2" paintOrder="stroke" fontSize="15" fontStyle="italic">
        <text x="1385" y="764" textLength="48">Kanpur</text>
        <text x="1371" y="781" textLength="75">Civil Airport</text>
      </g>

      <g strokeWidth="1.500" fontWeight="500">
        <rect x="600.500" y="388.500" width="69" height="25" rx="2.500" fill="#f0f1d2" stroke="#c9cb94" />
        <text x="604.500" y="407.500" fontSize="15.500" textLength="60" fill="#5d6130">MDR78C</text>
        <rect x="704.500" y="633" width="49" height="43" rx="2.500" fill="#f6d6cd" stroke="#e0a193" />
        <text x="709" y="652" fontSize="15.500" textLength="39" fill="#743b30">NH19</text>
        <text x="709" y="670" fontSize="15.500" textLength="39" fill="#743b30">NH27</text>
        <rect x="1542.500" y="451" width="50" height="26" rx="2.500" fill="#f7e5d0" stroke="#dcb68c" />
        <text x="1549.500" y="470" fontSize="15.500" textLength="36" fill="#71522c">SH58</text>
      </g>

      <Place x={934.500} y={584.500} size={16} w={69}>Armapur</Place>
      <Place x={865.500} y={616} size={16} w={42}>Panki</Place>
      <Place x={1181} y={642.500} size={21.500} w={77}>Kanpur</Place>
      <Place x={1462} y={555.500} size={19} w={101}>Shuklaganj</Place>
      <Place x={1330} y={699.500} size={16} w={157}>Kanpur Cantonment</Place>
      <Place x={1256} y={737.500} size={16} w={103}>Kidwai Nagar</Place>

      <path d="M1136 677L1148 655Q1165 634 1180 637Q1188 645 1172 657Z" fill="url(#shade)" opacity="0.600" />
      <g transform="translate(1117.750 618.200) scale(1.460)">
        <path d="M12.500.5C5.900.5.500 5.900.500 12.600c0 3 1.100 6.200 2.300 8.600L12.500 40.500l9.700-19.300c1.200-2.400 2.300-5.600 2.300-8.600C24.500 5.900 19.100.5 12.500.5z" fill="url(#pin)" stroke="#2b6ea6" strokeWidth="0.900" />
        <path d="M12.500 1.600C6.500 1.600 1.600 6.500 1.600 12.600c0 2.800 1 5.800 2.200 8.100L12.500 38l8.700-17.300c1.200-2.300 2.200-5.300 2.200-8.100 0-6.100-4.900-11-10.900-11z" stroke="#ffffff" strokeOpacity="0.180" />
        <circle cx="12.500" cy="13" r="4.300" fill="#ffffff" stroke="#2b78b8" strokeWidth="0.500" />
      </g>
    </svg>
  );
}

function Field({ label, value }: { label: string; value: string }) {
  return (
    <label className="flex flex-col">
      <span className="h-[30px] pt-[2px] text-[20px] leading-[30px] font-semibold tracking-[-0.35px] text-gray-700">{label}</span>
      <input readOnly value={value} className="mt-[6px] h-[62px] w-full rounded-[9px] border border-[#d1d5db] bg-white px-3 pt-[1px] text-[23px] tracking-[-0.3px] text-black outline-none" />
    </label>
  );
}

export default function App() {
  return (
    <div className="flex h-[1080px] w-full flex-col items-center overflow-hidden bg-[#f3f4f6] pt-[56px] font-['Open_Sans',sans-serif]">
      <h1 className="h-[90px] text-[44px] leading-[59px] font-bold tracking-[-0.98px] whitespace-nowrap text-[#15803d]">Sustainability Analysis Platform</h1>
      <main className="h-[878px] w-[1344px] rounded-[12px] bg-white p-9 shadow-[0_15px_23px_-4px_rgba(0,0,0,0.1),0_6px_9px_-6px_rgba(0,0,0,0.1)]">
        <div className="relative h-[600px] rounded-[12px] shadow-[0_0_0_2px_#0e1013,0_1px_0_2px_#aaaaaa,0_-1px_0_2px_#aaaaaa]">
          <div className="h-full overflow-hidden rounded-[11px]">
            <MapCanvas />
          </div>
          <div className="absolute top-[15px] left-[15px] w-[51px] overflow-hidden rounded-[6px] border-[3px] border-black/20 bg-white bg-clip-padding font-['Liberation_Sans',sans-serif] text-[35px] text-black">
            <button className="flex h-[45px] w-full items-center justify-center border-b border-[#cccccc] pl-[2px] leading-none [-webkit-text-stroke:0.6px_black]">+</button>
            <button className="flex h-[45px] w-full items-center justify-center pt-[2px] pl-[2px] leading-none">−</button>
          </div>
          <div className="absolute right-0 bottom-0 flex h-[25px] w-[351px] items-center overflow-hidden rounded-br-[11px] bg-white/80 pl-[7px] font-['Liberation_Sans',sans-serif] text-[18px] leading-[25px] whitespace-pre text-[#333333]">
            <svg className="mr-[5px] h-3 w-[18px]" viewBox="0 0 18 12">
              <path fill="#4c7be1" d="M0 0h18v6H0z" />
              <path fill="#ffd500" d="M0 6h18v6H0z" />
            </svg>
            <span className="text-[#0078a8]">Leaflet</span>
            <span> | © </span>
            <span className="text-[#0078a8]">OpenStreetMap</span>
            <span> contributors</span>
          </div>
        </div>
        <div className="mt-6 grid grid-cols-2 gap-6">
          <Field label="Latitude" value="26.4519" />
          <Field label="Longitude" value="80.3025" />
        </div>
        <button className="mt-6 flex h-[60px] w-full items-center justify-center rounded-[9px] bg-[#18a34a] pt-[2px] text-[23px] tracking-[-0.15px] text-white">Get Sustainability Report</button>
      </main>
    </div>
  );
}
